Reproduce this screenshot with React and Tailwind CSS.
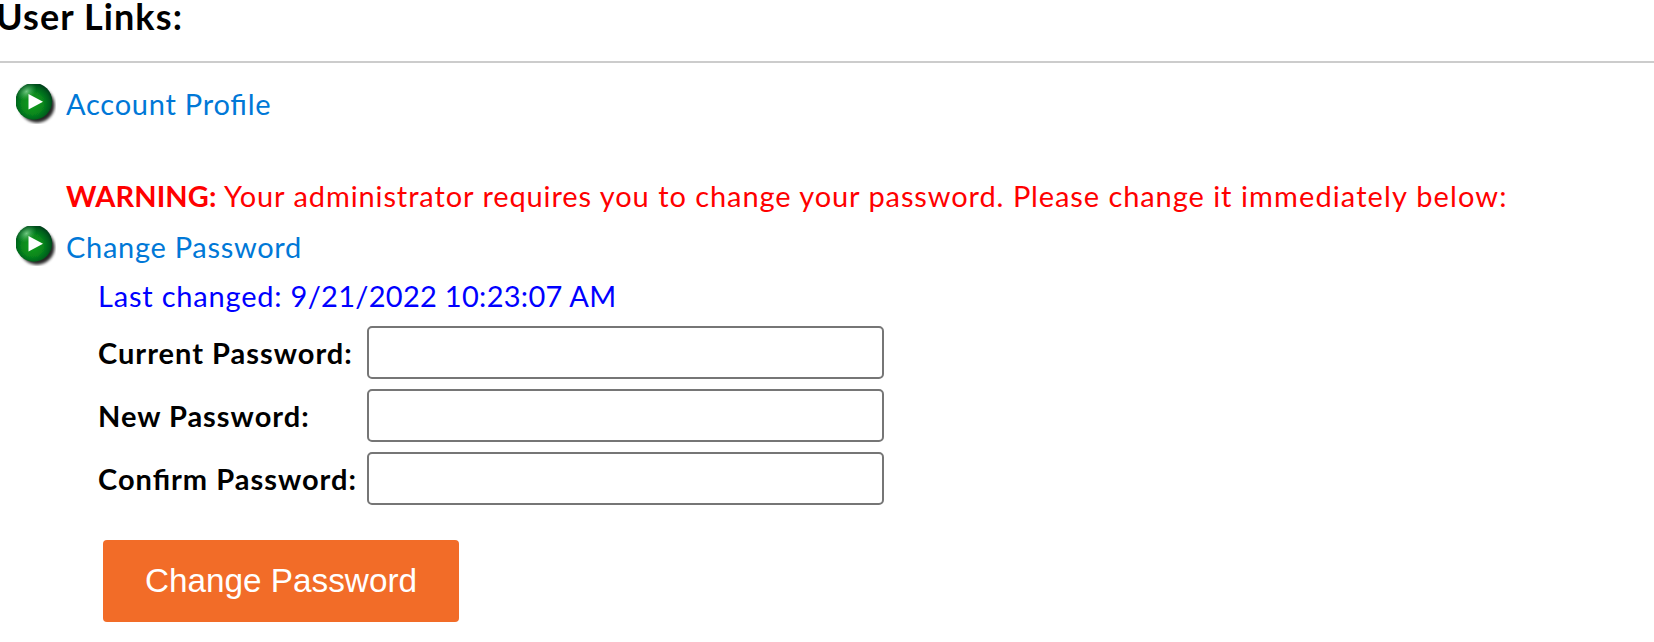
function PlayIcon({ id }) {
  return (
    <svg width="40" height="40" viewBox="0 0 40 40" className="shrink-0" aria-hidden="true">
      <defs>
        <radialGradient id={`${id}-ball`} cx="0.46" cy="0.56" r="0.58">
          <stop offset="0" stopColor="#0aa022" />
          <stop offset="0.5" stopColor="#07871a" />
          <stop offset="0.8" stopColor="#04601a" />
          <stop offset="1" stopColor="#023a1a" />
        </radialGradient>
        <radialGradient id={`${id}-shine`} cx="0.5" cy="0.5" r="0.5">
          <stop offset="0" stopColor="#8fdc9c" stopOpacity="0.8" />
          <stop offset="1" stopColor="#3fae56" stopOpacity="0" />
        </radialGradient>
        <filter id={`${id}-blur`} x="-20%" y="-20%" width="140%" height="140%">
          <feGaussianBlur stdDeviation="1.6" />
        </filter>
        <filter id={`${id}-soft`} x="-20%" y="-20%" width="140%" height="140%">
          <feGaussianBlur stdDeviation="0.7" />
        </filter>
      </defs>
      <circle cx="21" cy="21.2" r="17.5" fill="#000" opacity="0.85" filter={`url(#${id}-blur)`} />
      <circle cx="17.8" cy="17.3" r="18.4" fill={`url(#${id}-ball)`} filter={`url(#${id}-soft)`} />
      <ellipse cx="10.5" cy="7.5" rx="11" ry="8" transform="rotate(-35 10.5 7.5)" fill={`url(#${id}-shine)`} />
      <path d="M12.5 10 L27 17.7 L12.5 25.5 Z" fill="#fff" filter={`url(#${id}-soft)`} />
    </svg>
  );
}

function Field({ label, id }) {
  return (
    <div className="flex h-[53px] items-center">
      <label htmlFor={id} className="w-[269px] shrink-0 font-bold tracking-[1px] text-black">
        {label}
      </label>
      <input id={id} type="password" className="h-[53px] w-[517px] rounded-[5px] border-2 border-[#767676] bg-white px-2 outline-none" />
    </div>
  );
}

export default function App() {
  return (
    <main className="h-[642px] w-full overflow-hidden bg-white font-['Lato',sans-serif] text-[29px] leading-[40px] whitespace-nowrap [font-feature-settings:'liga'_1]">
      <h1 className="-ml-[4px] h-[61px] text-[36px] leading-[33px] font-bold tracking-[1.1px] text-black">User Links:</h1>
      <hr className="border-t-2 border-[#cccccc]" />
      <section className="pl-4">
        <div className="mt-[21px] flex items-center">
          <PlayIcon id="profile" />
          <a href="#profile" className="ml-[10px] tracking-[0.75px] text-[#0078d7]">Account Profile</a>
        </div>
        <p className="mt-[52px] ml-[50px] text-[#ff0000]">
          <b className="tracking-[0.1px]">WARNING:</b>{" "}
          <span className="tracking-[0.88px] [word-spacing:0.3px]">
            Your administrator requires you to change your password. Please change it{" "}
            <span className="tracking-[1.12px]">immediately below:</span>
          </span>
        </p>
        <div className="mt-[10px] flex items-center">
          <PlayIcon id="password" />
          <a href="#password" className="ml-[10px] pt-0.5 leading-[38px] tracking-[0.7px] text-[#0078d7]">Change Password</a>
        </div>
        <p className="mt-[10px] ml-[82px] text-[#0000ff]">
          <span className="tracking-[0.8px]">Last changed: </span>
          <span className="tracking-[0.29px]">9/21/2022 10:23:07 AM</span>
        </p>
        <form className="mt-[10px] ml-[82px] flex flex-col gap-[10px]">
          <Field id="current" label="Current Password:" />
          <Field id="new" label="New Password:" />
          <Field id="confirm" label="Confirm Password:" />
          <button type="button" className="mt-[25px] ml-[5px] h-[82px] w-[356px] rounded-[4px] bg-[#f26c28] font-['Liberation_Sans',Arial,sans-serif] text-[33.3px] text-white">
            Change Password
          </button>
        </form>
      </section>
    </main>
  );
}
